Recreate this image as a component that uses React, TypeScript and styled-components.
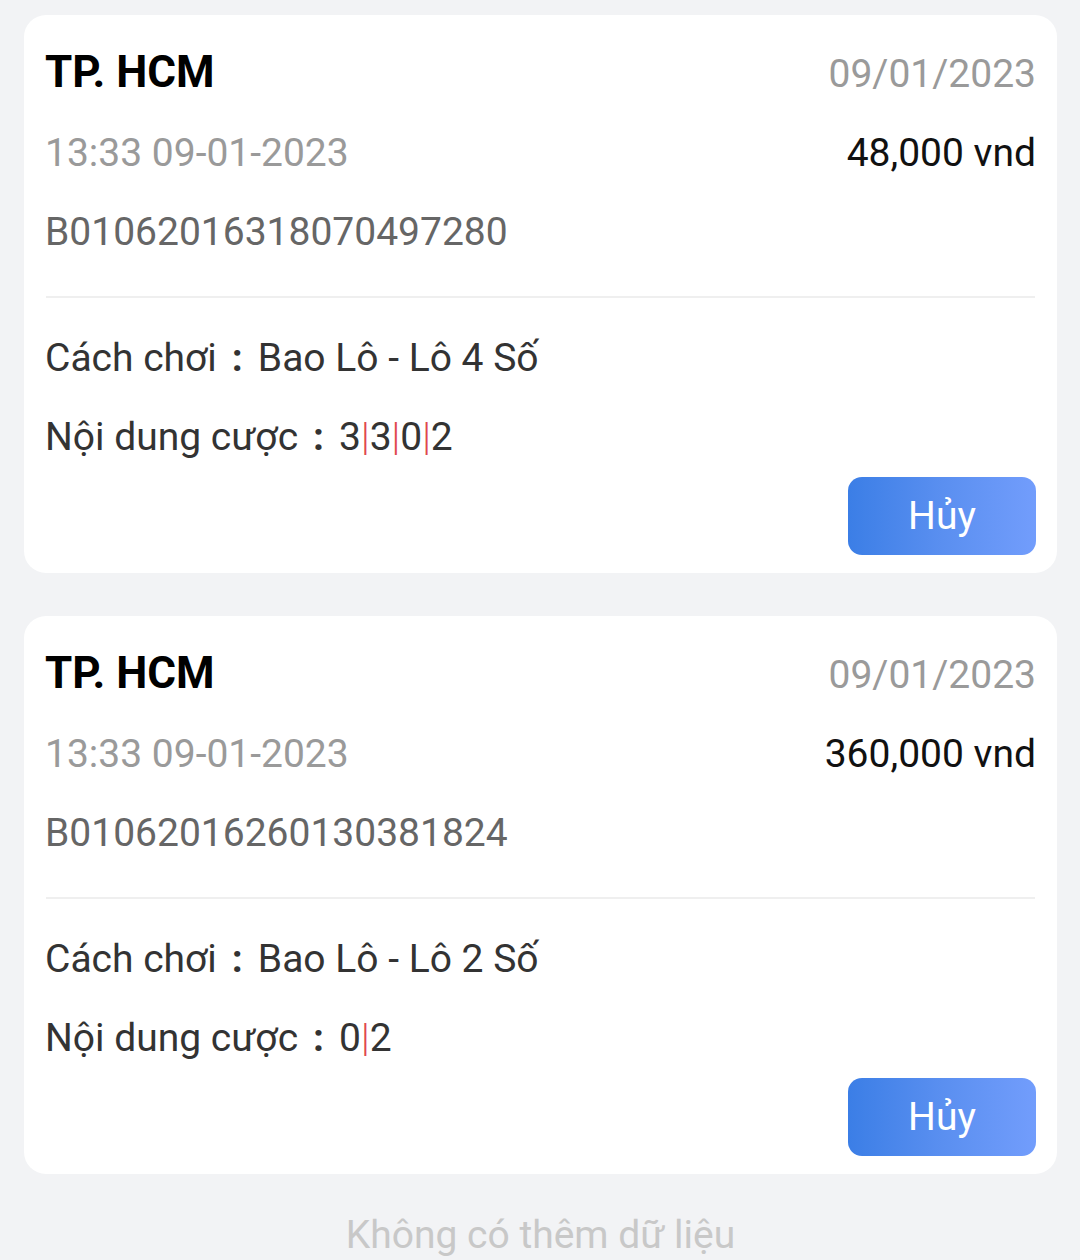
import React from "react";
import styled, { createGlobalStyle } from "styled-components";

const Global = createGlobalStyle`
  html, body {
    margin: 0;
    padding: 0;
    background: #f2f3f5;
  }
  body {
    font-family: Roboto, "Noto Sans CJK TC", sans-serif;
  }
`;

const Page = styled.div`
  width: 1080px;
  min-height: 1260px;
  box-sizing: border-box;
  padding: 15px 23px 0 24px;
  display: flex;
  flex-direction: column;
  gap: 43px;
  background: #f2f3f5;
`;

const Card = styled.div`
  background: #ffffff;
  border-radius: 22px;
  padding: 18px 21px 18px 21px;
  display: flex;
  flex-direction: column;
`;

const Row = styled.div<{ $lead?: boolean }>`
  display: flex;
  justify-content: space-between;
  align-items: baseline;
  height: 79px;
  line-height: 79px;
  font-size: 39px;
  margin-bottom: ${(p) => (p.$lead ? "2px" : "0")};
`;

const Title = styled.span`
  font-size: 44px;
  font-weight: 700;
  color: #000000;
`;

const Muted = styled.span<{ $tone?: string }>`
  color: ${(p) => p.$tone || "#9a9a9a"};
`;

const Amount = styled.span`
  color: #111111;
`;

const Divider = styled.div`
  height: 2px;
  background: #efefef;
  margin: 24px 1px 21px 1px;
`;

const InfoLine = styled.div`
  height: 79px;
  line-height: 79px;
  font-size: 39px;
  color: #333333;
  white-space: nowrap;
`;

const Colon = styled.span`
  display: inline-block;
  width: 41px;
  text-align: center;
  font-weight: 700;
`;

const Bar = styled.span`
  color: #e0474c;
  font-weight: 300;
`;

const Actions = styled.div`
  display: flex;
  justify-content: flex-end;
`;

const CancelButton = styled.button`
  width: 188px;
  height: 78px;
  border: none;
  border-radius: 14px;
  background: linear-gradient(90deg, #3b7ee6 0%, #5a8ff0 50%, #729dfc 100%);
  color: #ffffff;
  font-family: Roboto, sans-serif;
  font-size: 39px;
  padding: 0;
  cursor: pointer;
`;

const Footer = styled.div`
  margin-top: -21px;
  text-align: center;
  font-size: 39px;
  line-height: 79px;
  color: #c8c8c8;
`;

type Bet = {
  region: string;
  date: string;
  time: string;
  amount: string;
  id: string;
  mode: string;
  digits: string[];
};

const bets: Bet[] = [
  {
    region: "TP. HCM",
    date: "09/01/2023",
    time: "13:33 09-01-2023",
    amount: "48,000 vnd",
    id: "B01062016318070497280",
    mode: "Bao Lô - Lô 4 Số",
    digits: ["3", "3", "0", "2"],
  },
  {
    region: "TP. HCM",
    date: "09/01/2023",
    time: "13:33 09-01-2023",
    amount: "360,000 vnd",
    id: "B01062016260130381824",
    mode: "Bao Lô - Lô 2 Số",
    digits: ["0", "2"],
  },
];

const BetCard: React.FC<{ bet: Bet }> = ({ bet }) => (
  <Card>
    <Row $lead>
      <Title>{bet.region}</Title>
      <Muted>{bet.date}</Muted>
    </Row>
    <Row>
      <Muted>{bet.time}</Muted>
      <Amount>{bet.amount}</Amount>
    </Row>
    <Row>
      <Muted $tone="#666666">{bet.id}</Muted>
    </Row>
    <Divider />
    <InfoLine>
      Cách chơi<Colon>:</Colon>
      {bet.mode}
    </InfoLine>
    <InfoLine>
      Nội dung cược<Colon>:</Colon>
      {bet.digits.map((d, i) => (
        <React.Fragment key={i}>
          {i > 0 && <Bar>|</Bar>}
          {d}
        </React.Fragment>
      ))}
    </InfoLine>
    <Actions>
      <CancelButton>Hủy</CancelButton>
    </Actions>
  </Card>
);

export default function App() {
  return (
    <>
      <Global />
      <Page>
        {bets.map((b, i) => (
          <BetCard key={i} bet={b} />
        ))}
        <Footer>Không có thêm dữ liệu</Footer>
      </Page>
    </>
  );
}
